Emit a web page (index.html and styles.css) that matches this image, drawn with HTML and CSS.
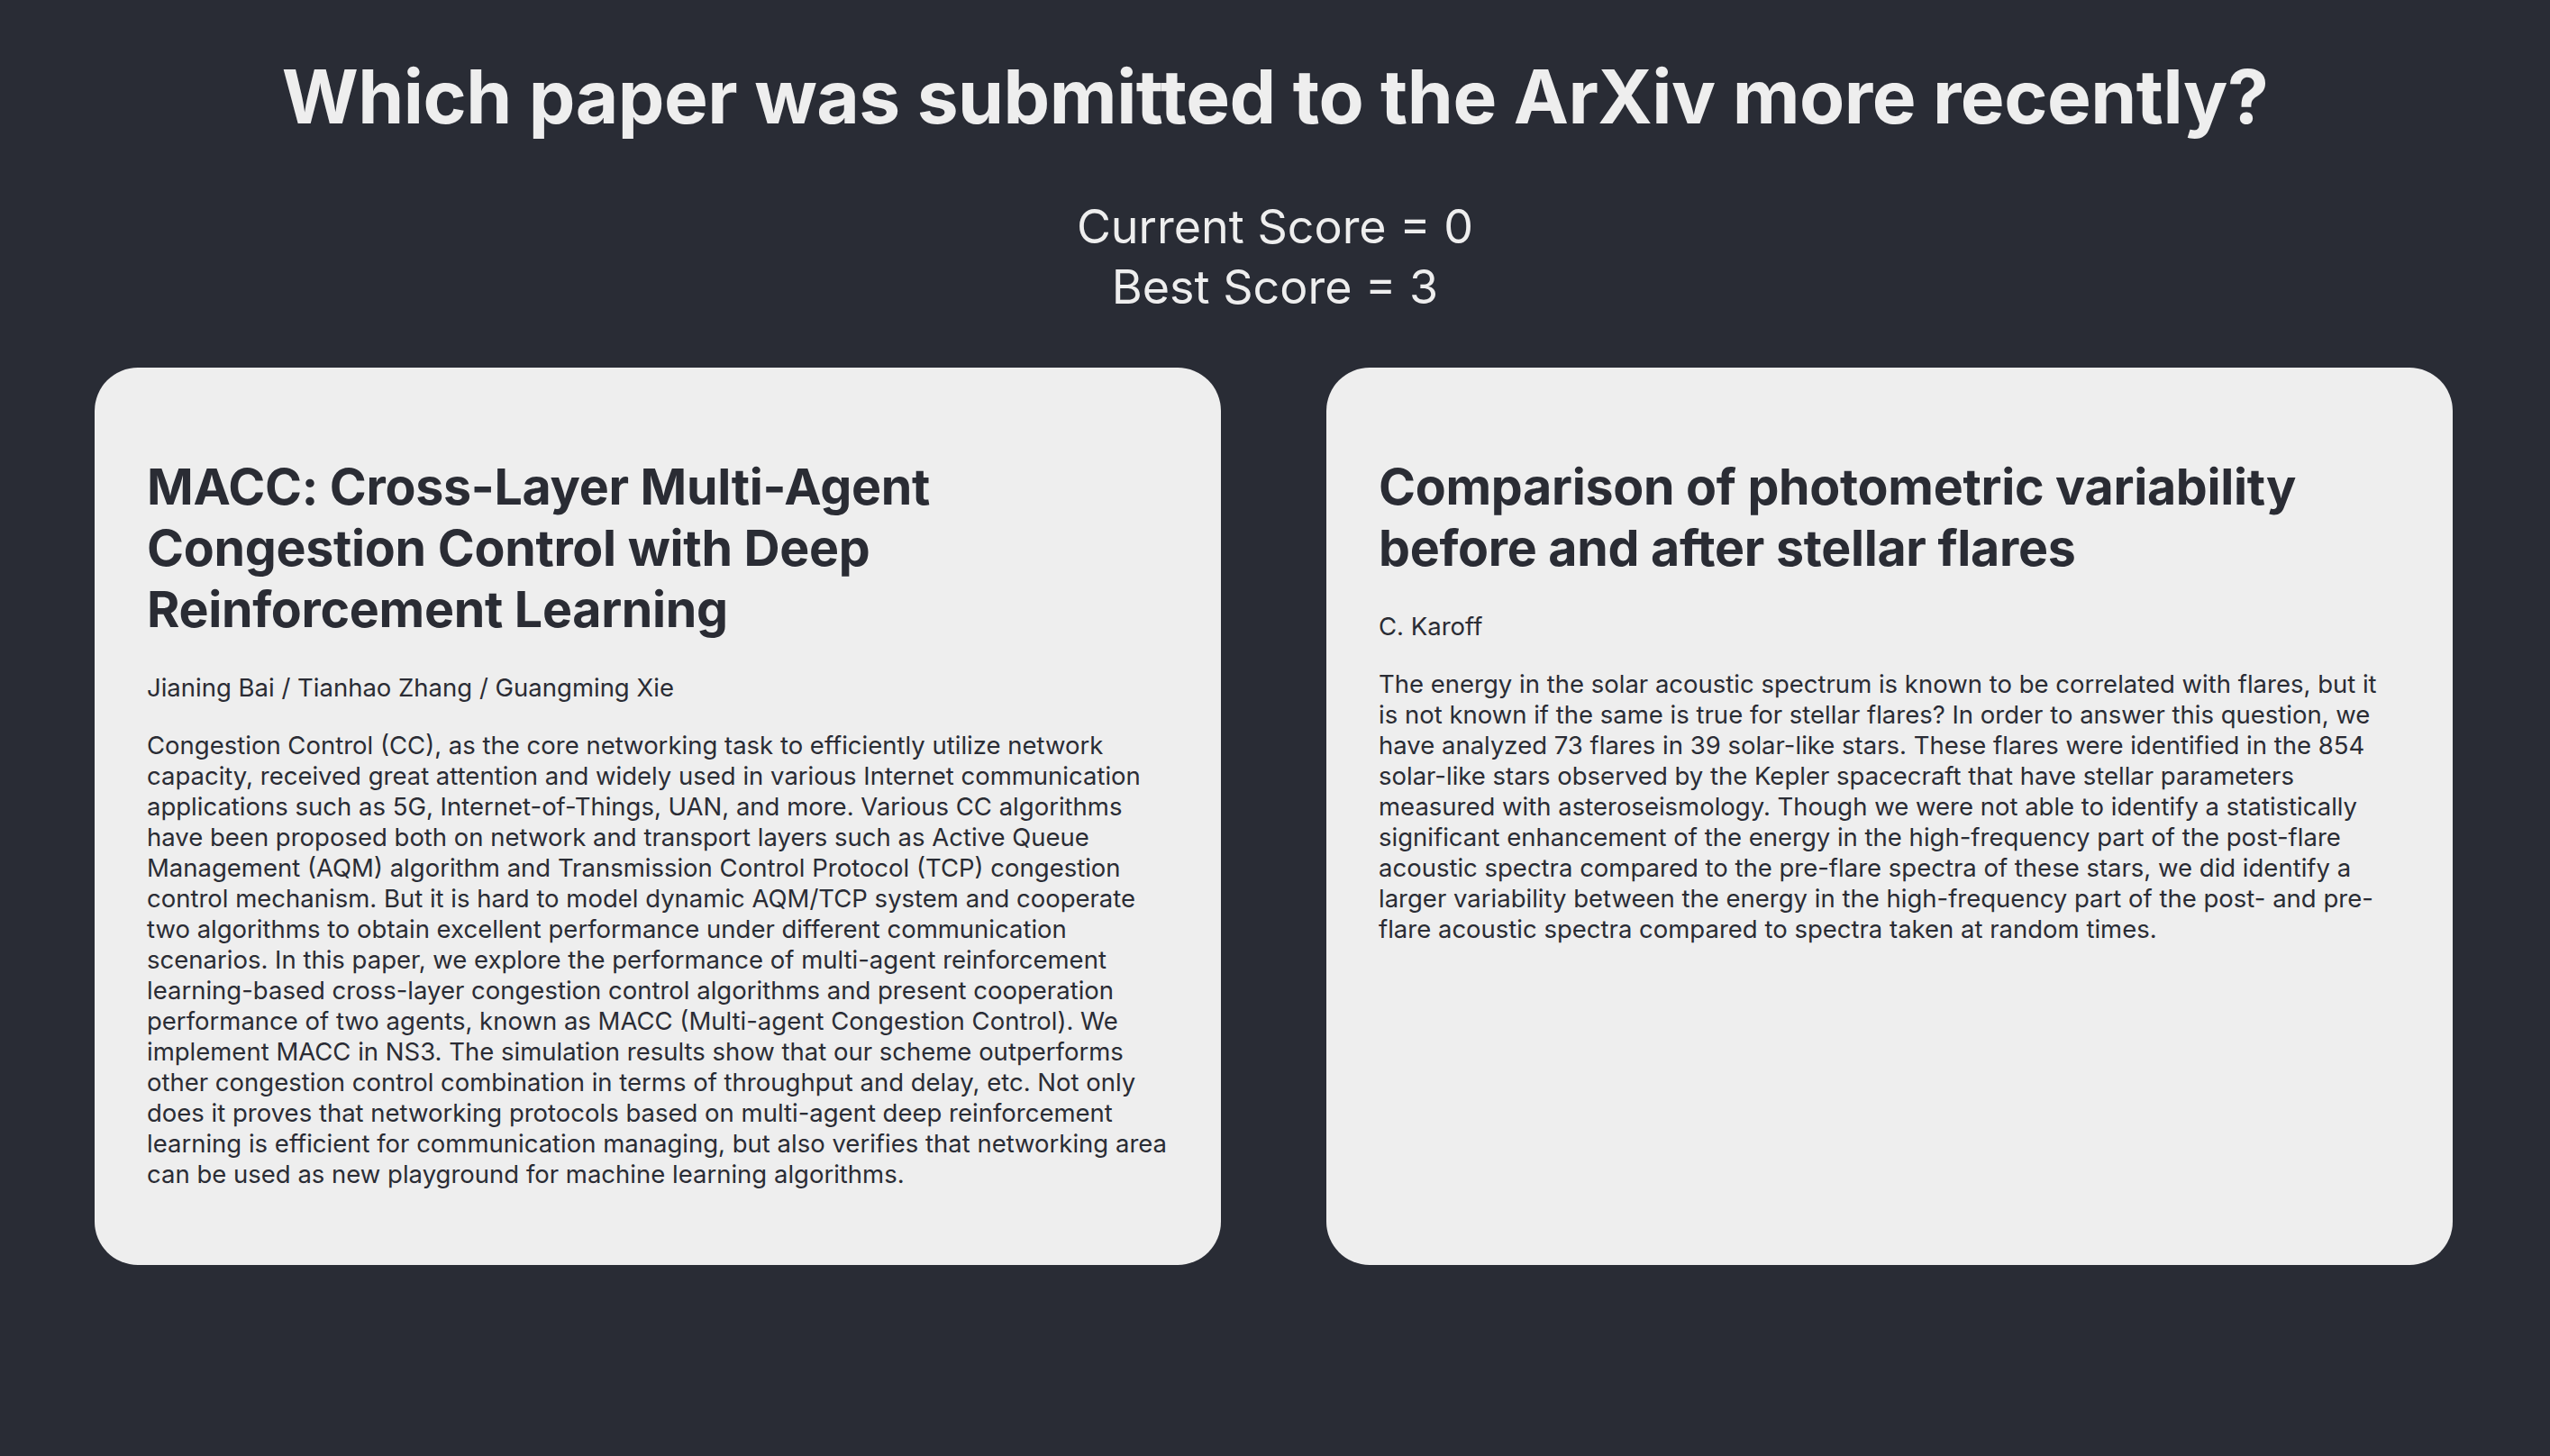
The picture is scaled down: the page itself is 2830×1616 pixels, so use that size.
FILE: index.html
```html
<!DOCTYPE html>
<html lang="en">
<head>
<meta charset="utf-8">
<title>ArXiv Game</title>
<link rel="stylesheet" href="styles.css">
</head>
<body>
<main class="page">
  <h1 class="question">Which paper was submitted to the ArXiv more recently?</h1>
  <div class="scores">
    <div class="score">Current Score = 0</div>
    <div class="score">Best Score = 3</div>
  </div>
  <section class="cards">
    <article class="card">
      <h2 class="card-title">MACC: Cross-Layer Multi-Agent Congestion Control with Deep Reinforcement Learning</h2>
      <p class="authors">Jianing Bai / Tianhao Zhang / Guangming Xie</p>
      <p class="abstract">Congestion Control (CC), as the core networking task to efficiently utilize network capacity, received great attention and widely used in various Internet communication applications such as 5G, Internet-of-Things, UAN, and more. Various CC algorithms have been proposed both on network and transport layers such as Active Queue Management (AQM) algorithm and Transmission Control Protocol (TCP) congestion control mechanism. But it is hard to model dynamic AQM/TCP system and cooperate two algorithms to obtain excellent performance under different communication scenarios. In this paper, we explore the performance of multi-agent reinforcement learning-based cross-layer congestion control algorithms and present cooperation performance of two agents, known as MACC (Multi-agent Congestion Control). We implement MACC in NS3. The simulation results show that our scheme outperforms other congestion control combination in terms of throughput and delay, etc. Not only does it proves that networking protocols based on multi-agent deep reinforcement learning is efficient for communication managing, but also verifies that networking area can be used as new playground for machine learning algorithms.</p>
    </article>
    <article class="card">
      <h2 class="card-title">Comparison of photometric variability before and after stellar flares</h2>
      <p class="authors">C. Karoff</p>
      <p class="abstract">The energy in the solar acoustic spectrum is known to be correlated with flares, but it is not known if the same is true for stellar flares? In order to answer this question, we have analyzed 73 flares in 39 solar-like stars. These flares were identified in the 854 solar-like stars observed by the Kepler spacecraft that have stellar parameters measured with asteroseismology. Though we were not able to identify a statistically significant enhancement of the energy in the high-frequency part of the post-flare acoustic spectra compared to the pre-flare spectra of these stars, we did identify a larger variability between the energy in the high-frequency part of the post- and pre-flare acoustic spectra compared to spectra taken at random times.</p>
    </article>
  </section>
</main>
</body>
</html>
```

FILE: styles.css
```css
html, body {
  margin: 0;
  padding: 0;
  background: #292c35;
}

body {
  font-family: Inter, "Noto Sans", "Liberation Sans", sans-serif;
  color: #eeeeee;
  min-height: 1616px;
}

.page {
  display: flex;
  flex-direction: column;
  align-items: center;
  padding-top: 58px;
}

.question {
  margin: 0;
  font-size: 82px;
  font-weight: 700;
  line-height: 100px;
  letter-spacing: -0.5px;
  text-align: center;
}

.scores {
  margin-top: 60px;
  display: flex;
  flex-direction: column;
  align-items: center;
  font-size: 52px;
  font-weight: 400;
  line-height: 67px;
}

.cards {
  align-self: stretch;
  display: flex;
  gap: 117px;
  padding: 56px 108px 0 105px;
}

.card {
  flex: 1 1 0;
  background: #eeeeee;
  color: #2a2c34;
  border-radius: 48px;
  padding: 58px 58px 30px;
  height: 996px;
  box-sizing: border-box;
}

.card-title {
  margin: 40px 0 0;
  font-size: 55.5px;
  font-weight: 700;
  line-height: 68px;
  letter-spacing: -0.3px;
}

.authors {
  margin: 35px 0 0;
  font-size: 27.5px;
  line-height: 36px;
}

.abstract {
  margin: 29px 0 0;
  font-size: 27.5px;
  line-height: 34px;
}
```
